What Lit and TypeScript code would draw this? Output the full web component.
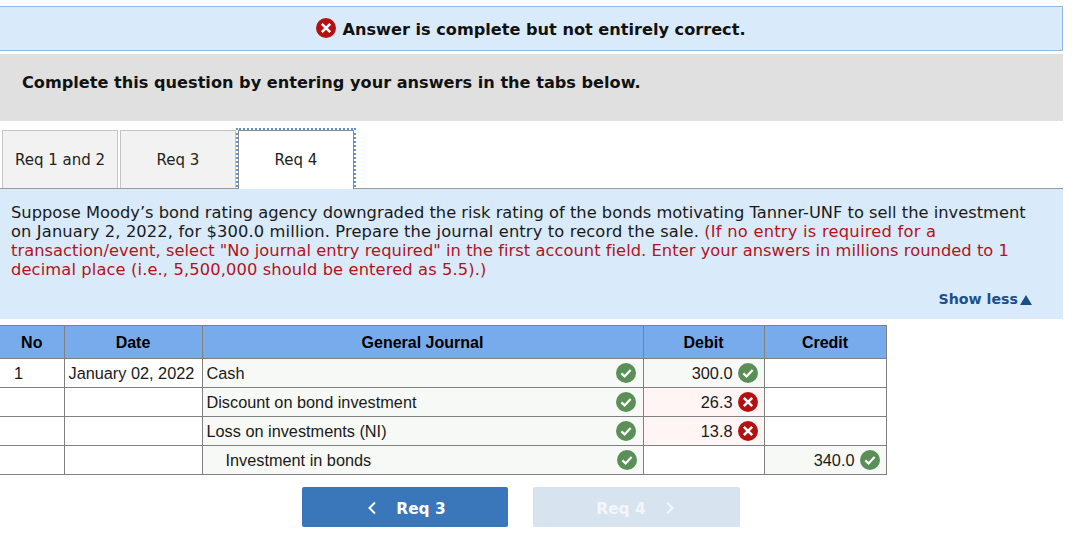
import { LitElement, html, css } from "lit";
import { customElement } from "lit/decorators.js";

const ok = html`<svg class="ic" viewBox="0 0 20 20"><circle cx="10" cy="10" r="10" fill="#5a8f58"/><path d="M5.4 10.4 8.6 13.4 14.6 7" fill="none" stroke="#fff" stroke-width="2.2"/></svg>`;
const bad = html`<svg class="ic" viewBox="0 0 20 20"><circle cx="10" cy="10" r="10" fill="#b31111"/><path d="M5.8 5.8 14.2 14.2M14.2 5.8 5.8 14.2" fill="none" stroke="#fff" stroke-width="2.6"/></svg>`;

const rows = [
  { no: "1", date: "January 02, 2022", acct: "Cash", indent: false, debit: "300.0", dOk: true, credit: "" },
  { no: "", date: "", acct: "Discount on bond investment", indent: false, debit: "26.3", dOk: false, credit: "" },
  { no: "", date: "", acct: "Loss on investments (NI)", indent: false, debit: "13.8", dOk: false, credit: "" },
  { no: "", date: "", acct: "Investment in bonds", indent: true, debit: "", dOk: true, credit: "340.0" },
];

@customElement("app-root")
export class AppRoot extends LitElement {
  static styles = css`
    :host { display: block; width: 1063px; padding-top: 6px; font-family: "DejaVu Sans", Verdana, sans-serif; color: #111; }
    .banner { height: 43px; background: #d9ebfa; border: 1px solid #8fbbe6; border-left: 0; display: flex; align-items: center; justify-content: center; gap: 6px; font-weight: 700; font-size: 16.15px; }
    .banner span { padding-top: 1px; }
    .prompt { margin-top: 3px; height: 67px; background: #e0e0e0; display: flex; align-items: center; padding-left: 22px; padding-bottom: 10px; box-sizing: border-box; font-weight: 700; font-size: 16.15px; }
    .tabs { display: flex; margin-top: 9px; height: 58px; padding-left: 2px; gap: 2px; border-bottom: 1px solid #999; }
    .tab { width: 114px; border: 1px solid #c4c4c4; border-bottom: 0; background: #f2f2f2; display: flex; align-items: center; justify-content: center; font-size: 15px; color: #222; }
    .tab.active { background: #fff; border-color: #8a8a8a; outline: 2px dotted #5f93d0; width: 116px; height: 59px; box-sizing: border-box; padding-bottom: 1px; }
    .panel { height: 130px; box-sizing: border-box; background: #d9ebfa; padding: 14px 26px 0 11px; font-size: 16.3px; line-height: 19px; color: #1a1a1a; position: relative; }
    .panel p { margin: 0; }
    .red { color: #b5121b; }
    .t1 { letter-spacing: .13px; }
    .t2 { letter-spacing: .24px; }
    .t3 { letter-spacing: .04px; }
    .t4 { letter-spacing: .12px; }
    .more { position: absolute; right: 31px; top: 101px; display: flex; align-items: center; gap: 2px; font-weight: 700; font-size: 14.2px; color: #1c4f8a; }
    .more i { width: 0; height: 0; border-left: 6px solid transparent; border-right: 6px solid transparent; border-bottom: 10px solid #1c4f8a; }
    table { margin-top: 6px; border-collapse: collapse; table-layout: fixed; width: 886px; font-family: "Liberation Sans", Arial, sans-serif; font-size: 16.3px; color: #1a1a1a; }
    th, td { border: 1px solid #808080; padding: 1px 0 0; box-sizing: border-box; height: 29px; overflow: hidden; white-space: nowrap; }
    tr > :first-child { border-left: 0; }
    th { height: 33px; background: #78abec; color: #000; font-size: 16px; font-weight: 700; text-align: center; }
    .no { padding-left: 14px; }
    .date { padding-left: 4px; }
    .acct { background: #f7f9f6; }
    .acct > div { display: flex; align-items: center; justify-content: space-between; padding: 0 7px 0 4px; }
    .acct.ind > div { padding-left: 23px; padding-right: 6px; }
    .amt > div { display: flex; align-items: center; justify-content: flex-end; gap: 5px; padding-right: 6px; }
    .amt.good { background: #f7f9f6; }
    .amt.wrong { background: #fff5f4; }
    .ic { width: 20px; height: 20px; display: block; flex: none; margin-top: -1px; }
    .nav { display: flex; gap: 25px; margin: 12px 0 0 302px; }
    .btn { width: 206px; height: 40px; border-radius: 2px; background: #3976ba; color: #fff; display: flex; align-items: center; justify-content: center; gap: 19px; font-weight: 700; font-size: 15.4px; padding-top: 3px; padding-left: 3px; box-sizing: border-box; }
    .btn.off { width: 207px; background: #d8e3f0; color: #f3f6fa; padding-left: 0; padding-right: 2px; }
    .btn svg { width: 10px; height: 14px; margin-top: -2px; }
  `;

  render() {
    return html`
      <div class="banner">${bad}<span>Answer is complete but not entirely correct.</span></div>
      <div class="prompt">Complete this question by entering your answers in the tabs below.</div>
      <div class="tabs">
        <div class="tab">Req 1 and 2</div>
        <div class="tab">Req 3</div>
        <div class="tab active">Req 4</div>
      </div>
      <div class="panel">
        <p>Suppose Moody’s bond rating agency downgraded the risk rating of the bonds motivating Tanner-UNF to sell the investment <span class="t1">on January 2, 2022, for $300.0 million. Prepare the journal entry to record the sale.</span> <span class="red"><span class="t2">(If no entry is required for a</span> <span class="t3">transaction/event, select "No journal entry required" in the first account field. Enter your answers in millions rounded to 1</span> <span class="t4">decimal place (i.e., 5,500,000 should be entered as 5.5).)</span></span></p>
        <div class="more">Show less<i></i></div>
      </div>
      <table>
        <colgroup><col style="width:64px"/><col style="width:138px"/><col style="width:441px"/><col style="width:121px"/><col style="width:122px"/></colgroup>
        <thead><tr><th>No</th><th>Date</th><th>General Journal</th><th>Debit</th><th>Credit</th></tr></thead>
        <tbody>
          ${rows.map((r) => html`<tr>
            <td class="no">${r.no}</td>
            <td class="date">${r.date}</td>
            <td class="acct ${r.indent ? "ind" : ""}"><div><span>${r.acct}</span>${ok}</div></td>
            <td class="amt ${r.debit ? (r.dOk ? "good" : "wrong") : ""}">${r.debit ? html`<div><span>${r.debit}</span>${r.dOk ? ok : bad}</div>` : ""}</td>
            <td class="amt ${r.credit ? "good" : ""}">${r.credit ? html`<div><span>${r.credit}</span>${ok}</div>` : ""}</td>
          </tr>`)}
        </tbody>
      </table>
      <div class="nav">
        <div class="btn"><svg viewBox="0 0 10 14"><path d="M8 1.5 2.5 7 8 12.5" fill="none" stroke="currentColor" stroke-width="2"/></svg><span>Req 3</span></div>
        <div class="btn off"><span>Req 4</span><svg viewBox="0 0 10 14"><path d="M2 1.5 7.5 7 2 12.5" fill="none" stroke="currentColor" stroke-width="2"/></svg></div>
      </div>
    `;
  }
}
